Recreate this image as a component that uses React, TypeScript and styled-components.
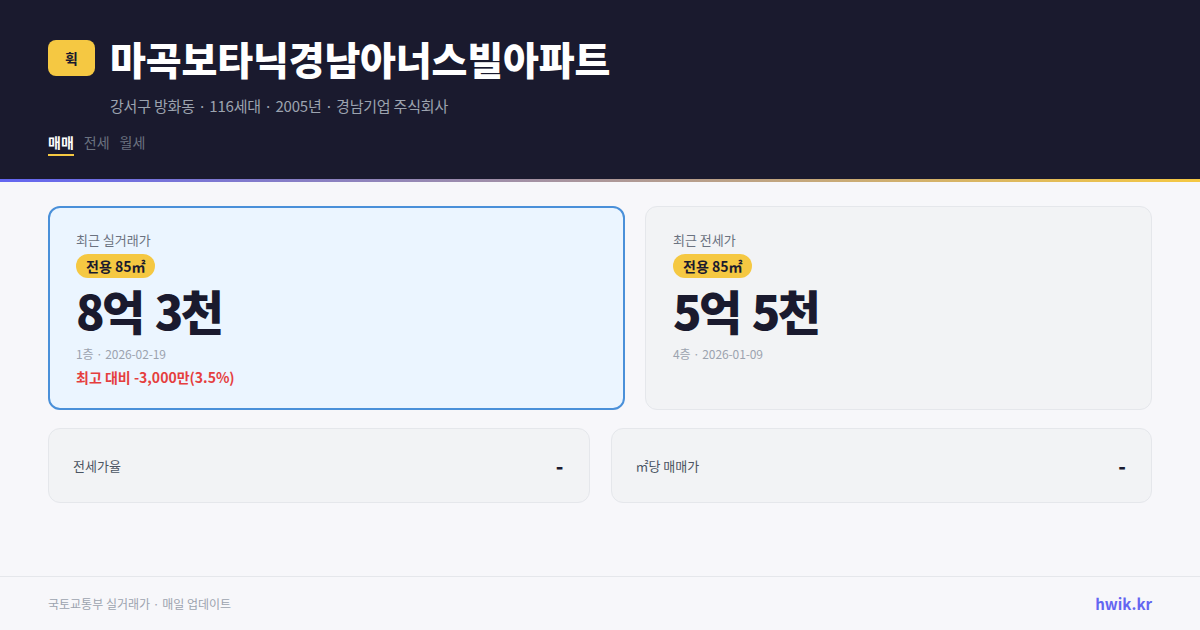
import React from 'react';
import styled, { createGlobalStyle } from 'styled-components';

const GlobalStyle = createGlobalStyle`
	html, body {
		margin: 0;
		padding: 0;
		background: #f7f7fa;
		font-family: "Noto Sans CJK KR", "Noto Sans", sans-serif;
	}
	* {
		box-sizing: border-box;
	}
`;

const Page = styled.div`
	width: 1200px;
	height: 630px;
	display: flex;
	flex-direction: column;
	background: #f7f7fa;
	overflow: hidden;
`;

const Header = styled.header`
	background: #1a1a2e;
	padding: 38px 48px 23px;
	border-bottom: 3px solid transparent;
	border-image: linear-gradient(90deg, #6366f1, #f5c842) 1;
	display: flex;
	flex-direction: column;
`;

const TitleRow = styled.div`
	display: flex;
	align-items: center;
	gap: 15px;
`;

const Logo = styled.div`
	width: 47px;
	height: 36px;
	border-radius: 8px;
	background: #f5c842;
	color: #1a1a2e;
	font-size: 14px;
	font-weight: 700;
	display: flex;
	align-items: center;
	justify-content: center;
`;

const Title = styled.h1`
	margin: 0;
	color: #ffffff;
	font-size: 39px;
	font-weight: 900;
	letter-spacing: -0.15px;
	line-height: 40px;
`;

const Subtitle = styled.div`
	margin: 17px 0 0 62px;
	color: #9ca3af;
	font-size: 15px;
	line-height: 22px;
	letter-spacing: -0.2px;
`;

const Tabs = styled.nav`
	display: flex;
	gap: 10px;
	margin-top: 15px;
`;

const Tab = styled.span<{ $active?: boolean }>`
	font-size: 14px;
	line-height: 20px;
	padding-bottom: 2px;
	font-weight: ${(p) => (p.$active ? 700 : 400)};
	color: ${(p) => (p.$active ? '#ffffff' : '#6b7280')};
	border-bottom: 2px solid ${(p) => (p.$active ? '#f5c842' : 'transparent')};
`;

const Main = styled.main`
	flex: 1;
	padding: 24px 48px;
	display: flex;
	flex-direction: column;
	gap: 18px;
`;

const PriceGrid = styled.div`
	display: grid;
	grid-template-columns: 577fr 507fr;
	gap: 20px;
`;

const PriceCard = styled.div<{ $highlight?: boolean }>`
	height: 204px;
	border-radius: 12px;
	padding: ${(p) => (p.$highlight ? '23px 26px' : '24px 27px')};
	background: ${(p) => (p.$highlight ? '#ebf5ff' : '#f2f3f5')};
	border: ${(p) => (p.$highlight ? '2px solid #4a90d9' : '1px solid #e5e7eb')};
	display: flex;
	flex-direction: column;
	align-items: flex-start;
`;

const CardLabel = styled.div`
	font-size: 13px;
	line-height: 18px;
	color: #6b7280;
`;

const AreaBadge = styled.span`
	margin-top: 5px;
	background: #f5c842;
	color: #1a1a2e;
	font-size: 14px;
	font-weight: 700;
	line-height: 24px;
	padding: 0 10px;
	border-radius: 12px;
`;

const Price = styled.div`
	margin-top: 1px;
	font-size: 47px;
	font-weight: 900;
	line-height: 62px;
	letter-spacing: -2.6px;
	word-spacing: 4px;
	color: #1a1a2e;
`;

const Meta = styled.div`
	margin-top: 4px;
	font-size: 12px;
	line-height: 18px;
	letter-spacing: -0.1px;
	color: #9ca3af;
`;

const Diff = styled.div`
	margin-top: 4px;
	font-size: 14px;
	font-weight: 600;
	line-height: 20px;
	color: #e53e3e;
`;

const StatGrid = styled.div`
	display: grid;
	grid-template-columns: 1fr 1fr;
	gap: 21px;
`;

const StatBox = styled.div`
	height: 75px;
	border-radius: 12px;
	background: #f2f3f5;
	border: 1px solid #e5e7eb;
	padding: 0 25px 0 24px;
	display: flex;
	align-items: center;
	justify-content: space-between;
`;

const StatLabel = styled.span`
	font-size: 13px;
	color: #4b5563;
`;

const StatValue = styled.span`
	font-size: 20px;
	font-weight: 900;
	color: #1a1a2e;
`;

const Footer = styled.footer`
	height: 54px;
	border-top: 1px solid #e5e7eb;
	padding: 0 48px;
	display: flex;
	align-items: center;
	justify-content: space-between;
`;

const FooterNote = styled.span`
	font-size: 12px;
	color: #9ca3af;
`;

const Brand = styled.span`
	font-size: 15px;
	font-weight: 700;
	color: #6366f1;
`;

const prices = [
	{ label: '최근 실거래가', price: '8억 3천', meta: '1층 · 2026-02-19', diff: '최고 대비 -3,000만(3.5%)', highlight: true },
	{ label: '최근 전세가', price: '5억 5천', meta: '4층 · 2026-01-09' },
];

const stats = [
	{ label: '전세가율', value: '-' },
	{ label: '㎡당 매매가', value: '-' },
];

export default function App() {
	return (
		<Page>
			<GlobalStyle />
			<Header>
				<TitleRow>
					<Logo>휙</Logo>
					<Title>마곡보타닉경남아너스빌아파트</Title>
				</TitleRow>
				<Subtitle>강서구 방화동 · 116세대 · 2005년 · 경남기업 주식회사</Subtitle>
				<Tabs>
					<Tab $active>매매</Tab>
					<Tab>전세</Tab>
					<Tab>월세</Tab>
				</Tabs>
			</Header>
			<Main>
				<PriceGrid>
					{prices.map((p) => (
						<PriceCard key={p.label} $highlight={p.highlight}>
							<CardLabel>{p.label}</CardLabel>
							<AreaBadge>전용 85㎡</AreaBadge>
							<Price>{p.price}</Price>
							<Meta>{p.meta}</Meta>
							{p.diff && <Diff>{p.diff}</Diff>}
						</PriceCard>
					))}
				</PriceGrid>
				<StatGrid>
					{stats.map((s) => (
						<StatBox key={s.label}>
							<StatLabel>{s.label}</StatLabel>
							<StatValue>{s.value}</StatValue>
						</StatBox>
					))}
				</StatGrid>
			</Main>
			<Footer>
				<FooterNote>국토교통부 실거래가 · 매일 업데이트</FooterNote>
				<Brand>hwik.kr</Brand>
			</Footer>
		</Page>
	);
}
